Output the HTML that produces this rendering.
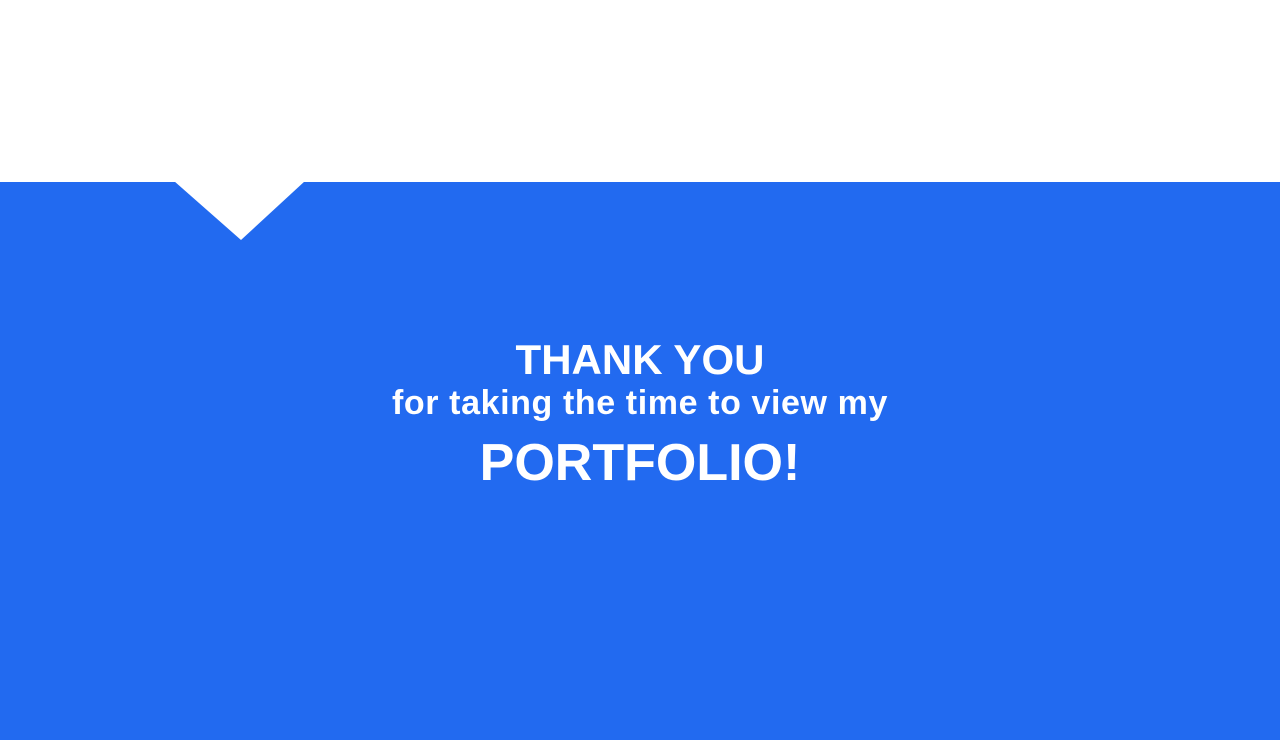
<!DOCTYPE html>
<html><head><meta charset="utf-8"><style>
html,body{margin:0;padding:0;width:1280px;height:740px;overflow:hidden;background:#fff}
.blue{position:absolute;left:0;top:182px;width:1280px;height:558px;background:#226AF0}
svg{position:absolute;left:0;top:181px}
.t{position:absolute;left:0;width:1280px;text-align:center;color:#fff;font-family:"Liberation Sans",sans-serif;font-weight:bold;white-space:nowrap;line-height:1}
</style></head><body>
<div class="blue"></div>
<svg width="400" height="70"><polygon points="174,0 305,0 241,59" fill="#fff"/></svg>
<div class="t" style="top:339px;font-size:42px">THANK YOU</div>
<div class="t" style="top:386px;font-size:34px;letter-spacing:0.6px">for taking the time to view my</div>
<div class="t" style="top:437px;font-size:52px">PORTFOLIO!</div>
</body></html>
